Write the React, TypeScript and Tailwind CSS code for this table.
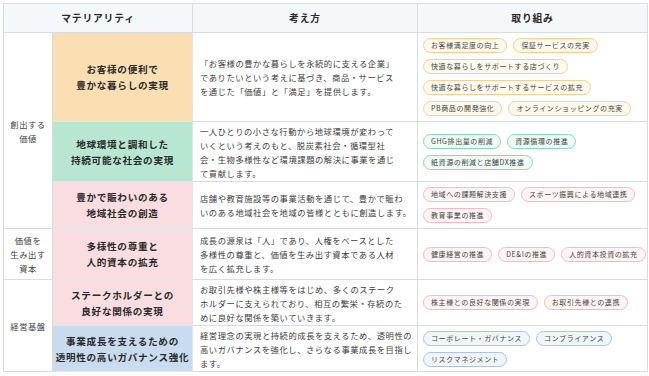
type Tone = "orange" | "green" | "pink" | "blue";

type Row = {
  title: string[];
  tone: Tone;
  desc: string[];
  chips: string[][];
  height: string;
};

const cellBg: Record<Tone, string> = {
  orange: "bg-[#fbdfb3]",
  green: "bg-[#b8e7d1]",
  pink: "bg-[#f9dde1]",
  blue: "bg-[#c9dcef]",
};

const chipTone: Record<Tone, string> = {
  orange: "border-[#f5cf96] bg-[#fff8ec]",
  green: "border-[#8fd8b5] bg-[#effaf5]",
  pink: "border-[#f3bac3] bg-[#fff4f5]",
  blue: "border-[#a9c4e5] bg-[#f0f5fc]",
};

const rows: Row[] = [
  {
    title: ["お客様の便利で", "豊かな暮らしの実現"],
    tone: "orange",
    desc: [
      "「お客様の豊かな暮らしを永続的に支える企業」",
      "でありたいという考えに基づき、商品・サービス",
      "を通じた「価値」と「満足」を提供します。",
    ],
    chips: [
      ["お客様満足度の向上", "保証サービスの充実"],
      ["快適な暮らしをサポートする店づくり"],
      ["快適な暮らしをサポートするサービスの拡充"],
      ["PB商品の開発強化", "オンラインショッピングの充実"],
    ],
    height: "h-[89px]",
  },
  {
    title: ["地球環境と調和した", "持続可能な社会の実現"],
    tone: "green",
    desc: [
      "一人ひとりの小さな行動から地球環境が変わって",
      "いくという考えのもと、脱炭素社会・循環型社",
      "会・生物多様性など環境課題の解決に事業を通じ",
      "て貢献します。",
    ],
    chips: [["GHG排出量の削減", "資源循環の推進"], ["紙資源の削減と店舗DX推進"]],
    height: "h-[60px]",
  },
  {
    title: ["豊かで賑わいのある", "地域社会の創造"],
    tone: "pink",
    desc: [
      "店舗や教育施設等の事業活動を通じて、豊かで賑わ",
      "いのある地域社会を地域の皆様とともに創造します。",
    ],
    chips: [["地域への課題解決支援", "スポーツ振興による地域連携"], ["教育事業の推進"]],
    height: "h-[47px]",
  },
  {
    title: ["多様性の尊重と", "人的資本の拡充"],
    tone: "pink",
    desc: [
      "成長の源泉は「人」であり、人権をベースとした",
      "多様性の尊重と、価値を生み出す資本である人材",
      "を広く拡充します。",
    ],
    chips: [["健康経営の推進", "DE&Iの推進", "人的資本投資の拡充"]],
    height: "h-[51px]",
  },
  {
    title: ["ステークホルダーとの", "良好な関係の実現"],
    tone: "pink",
    desc: [
      "お取引先様や株主様等をはじめ、多くのステーク",
      "ホルダーに支えられており、相互の繁栄・存続のた",
      "めに良好な関係を築いていきます。",
    ],
    chips: [["株主様との良好な関係の実現", "お取引先様との連携"]],
    height: "h-[46px]",
  },
  {
    title: ["事業成長を支えるための", "透明性の高いガバナンス強化"],
    tone: "blue",
    desc: [
      "経営理念の実現と持続的成長を支えるため、透明性の",
      "高いガバナンスを強化し、さらなる事業成長を目指し",
      "ます。",
    ],
    chips: [["コーポレート・ガバナンス", "コンプライアンス"], ["リスクマネジメント"]],
    height: "h-[46px]",
  },
];

const categories: { lines: string[]; span: number; at: number }[] = [
  { lines: ["創出する", "価値"], span: 3, at: 0 },
  { lines: ["価値を", "生み出す", "資本"], span: 1, at: 3 },
  { lines: ["経営基盤"], span: 2, at: 4 },
];

function Chip({ label, tone }: { label: string; tone: Tone }) {
  return (
    <span
      className={`flex h-[15px] items-center whitespace-nowrap rounded-full border px-[7px] text-[7px] tracking-[0.6px] text-[#444] ${chipTone[tone]}`}
    >
      {label}
    </span>
  );
}

export default function App() {
  return (
    <div className="min-h-screen bg-white p-[3px] font-['Noto_Sans_CJK_JP','Noto_Sans',sans-serif]">
      <table className="w-[644px] table-fixed border-collapse border border-[#d8dde3]">
        <colgroup>
          <col className="w-[49px]" />
          <col className="w-[140px]" />
          <col className="w-[225px]" />
          <col className="w-[230px]" />
        </colgroup>
        <thead>
          <tr className="h-[29px] bg-[#f5f8fb] text-[9.8px] font-bold tracking-[0.8px] text-[#2a2a2a]">
            <th colSpan={2} className="border border-[#d8dde3] text-center">
              マテリアリティ
            </th>
            <th className="border border-[#d8dde3] text-center">考え方</th>
            <th className="border border-[#d8dde3] text-center">取り組み</th>
          </tr>
        </thead>
        <tbody>
          {rows.map((row, i) => {
            const cat = categories.find((c) => c.at === i);
            return (
              <tr key={i} className={row.height}>
                {cat && (
                  <td
                    rowSpan={cat.span}
                    className="border border-[#d8dde3] bg-white text-center text-[8.3px] leading-[14px] tracking-[0.55px] text-[#444]"
                  >
                    {cat.lines.map((l) => (
                      <div key={l}>{l}</div>
                    ))}
                  </td>
                )}
                <td
                  className={`border border-[#e3e6ea] text-center text-[9.6px] font-bold leading-[16px] tracking-[0.7px] text-[#2a2a2a] ${cellBg[row.tone]}`}
                >
                  {row.title.map((l) => (
                    <div key={l} className="whitespace-nowrap">
                      {l}
                    </div>
                  ))}
                </td>
                <td className="border border-[#d8dde3] px-[7px] text-[8.3px] leading-[14px] tracking-[0.55px] text-[#3d3d3d]">
                  {row.desc.map((l) => (
                    <div key={l} className="whitespace-nowrap">
                      {l}
                    </div>
                  ))}
                </td>
                <td className="border border-[#d8dde3] px-[5px]">
                  <div className="flex flex-col gap-[6px]">
                    {row.chips.map((line, j) => (
                      <div key={j} className="flex gap-[6px]">
                        {line.map((c) => (
                          <Chip key={c} label={c} tone={row.tone} />
                        ))}
                      </div>
                    ))}
                  </div>
                </td>
              </tr>
            );
          })}
        </tbody>
      </table>
    </div>
  );
}
